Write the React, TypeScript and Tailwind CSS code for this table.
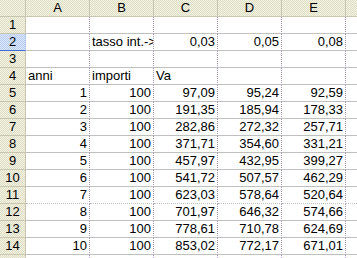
const COLS = ["A", "B", "C", "D", "E"];

type Cell = { v: string; align?: "left" | "right" };

const rows: Cell[][] = [
  [],
  [{ v: "" }, { v: "tasso int.->", align: "left" }, { v: "0,03" }, { v: "0,05" }, { v: "0,08" }],
  [],
  [{ v: "anni", align: "left" }, { v: "importi", align: "left" }, { v: "Va", align: "left" }],
  ...[
    ["97,09", "95,24", "92,59"],
    ["191,35", "185,94", "178,33"],
    ["282,86", "272,32", "257,71"],
    ["371,71", "354,60", "331,21"],
    ["457,97", "432,95", "399,27"],
    ["541,72", "507,57", "462,29"],
    ["623,03", "578,64", "520,64"],
    ["701,97", "646,32", "574,66"],
    ["778,61", "710,78", "624,69"],
    ["853,02", "772,17", "671,01"],
  ].map((vals, i) => [
    { v: String(i + 1) },
    { v: "100" },
    ...vals.map((v) => ({ v })),
  ]),
];

const headBg =
  "bg-[repeating-conic-gradient(#f7f4dc_0_25%,#dcdccc_0_50%)] bg-[length:2px_2px]";

export default function App() {
  return (
    <div className="w-[357px] h-[258px] overflow-hidden bg-white font-['Liberation_Sans',Arial,sans-serif] text-[13px] leading-[16px] text-black">
      {/* column headers */}
      <div className="flex h-[17px]">
        <div className={`w-[26px] shrink-0 border-b border-r border-[#c8c6ae] ${headBg}`} />
        {COLS.map((c) => (
          <div
            key={c}
            className={`w-[64px] shrink-0 border-b border-r border-[#c8c6ae] text-center ${headBg}`}
          >
            {c}
          </div>
        ))}
        <div className={`flex-1 border-b border-[#c8c6ae] ${headBg}`} />
      </div>

      {rows.map((row, r) => {
        const selected = r === 1;
        const dottedBottom = r === 10;
        return (
          <div key={r} className="flex h-[17px]">
            <div
              className={
                selected
                  ? "w-[26px] shrink-0 border-b border-r border-b-[#3f6fd8] border-r-[#b6c8ee] bg-[repeating-conic-gradient(#dbe8fb_0_25%,#b9cdf2_0_50%)] bg-[length:2px_2px] text-center"
                  : `w-[26px] shrink-0 border-b border-r border-[#c8c6ae] text-center ${headBg}`
              }
            >
              {r + 1}
            </div>
            {COLS.map((c, i) => {
              const cell = row[i];
              return (
                <div
                  key={c}
                  className={`w-[64px] shrink-0 overflow-hidden whitespace-nowrap px-[2px] border-b border-r border-b-[#c0c0c0] border-r-[#a898bc] [border-right-style:dotted] ${
                    dottedBottom ? "[border-bottom-style:dotted] border-b-[#a898bc]" : ""
                  } ${cell?.align === "left" ? "text-left" : "text-right"}`}
                >
                  {cell?.v}
                </div>
              );
            })}
            <div
              className={`flex-1 border-b border-b-[#c0c0c0] ${
                dottedBottom ? "[border-bottom-style:dotted] border-b-[#a898bc]" : ""
              }`}
            />
          </div>
        );
      })}

      {/* partial row 15 at the bottom edge */}
      <div className="flex h-[17px]">
        <div className={`w-[26px] shrink-0 border-r border-[#c8c6ae] ${headBg}`} />
        {COLS.map((c) => (
          <div
            key={c}
            className="w-[64px] shrink-0 border-r border-r-[#a898bc] [border-right-style:dotted]"
          />
        ))}
        <div className="flex-1" />
      </div>
    </div>
  );
}
